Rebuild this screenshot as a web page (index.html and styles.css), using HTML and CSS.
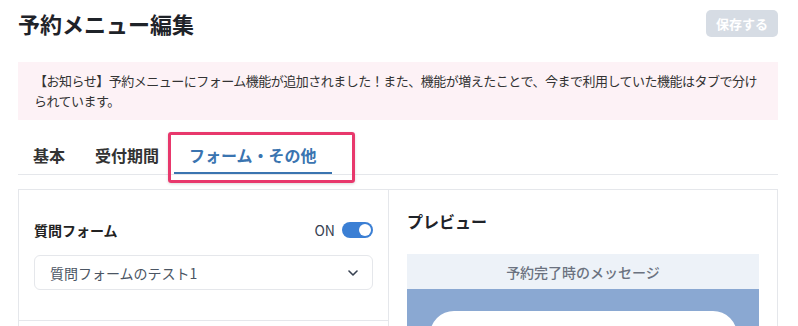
FILE: index.html
```html
<!DOCTYPE html>
<html lang="ja">
<head>
    <meta charset="UTF-8">
    <meta name="viewport" content="width=device-width, initial-scale=1.0">
    <title>予約メニュー編集</title>
    <link rel="stylesheet" href="styles.css">
</head>
<body>
    <div class="page">
        <header class="page-header">
            <h1>予約メニュー編集</h1>
            <button class="save-btn" disabled>保存する</button>
        </header>
        <div class="notice">【お知らせ】予約メニューにフォーム機能が追加されました！また、機能が増えたことで、今まで利用していた機能はタブで分けられています。</div>
        <nav class="tabs">
            <a class="tab">基本</a>
            <a class="tab">受付期間</a>
            <a class="tab active">フォーム・その他</a>
            <span class="highlight"></span>
        </nav>
        <div class="panel">
            <div class="settings">
                <section class="setting">
                    <div class="setting-row">
                        <h3>質問フォーム</h3>
                        <label class="switch">
                            <span>ON</span>
                            <span class="toggle"><span class="knob"></span></span>
                        </label>
                    </div>
                    <div class="select">
                        <span>質問フォームのテスト1</span>
                        <svg width="10" height="6" viewBox="0 0 10 6"><path d="M1 1l4 4 4-4" fill="none" stroke="#374151" stroke-width="1.6" stroke-linecap="round" stroke-linejoin="round"/></svg>
                    </div>
                </section>
            </div>
            <div class="preview">
                <h3>プレビュー</h3>
                <div class="preview-box">
                    <div class="preview-head">予約完了時のメッセージ</div>
                    <div class="preview-body">
                        <div class="preview-card"></div>
                    </div>
                </div>
            </div>
        </div>
    </div>
</body>
</html>
```

FILE: styles.css
```css
html, body {
    margin: 0;
    padding: 0;
    background: #fff;
    overflow: hidden;
}
body {
    font-family: "Noto Sans CJK JP", "Noto Sans", sans-serif;
    color: #333;
}
.page {
    padding: 10px 20px 0 18px;
}
.page-header {
    display: flex;
    justify-content: space-between;
    align-items: center;
    height: 27px;
}
.page-header h1 {
    margin: 0;
    font-size: 22px;
    font-weight: 700;
    color: #1f2329;
    line-height: 27px;
}
.save-btn {
    width: 72px;
    height: 27px;
    border: none;
    border-radius: 5px;
    background: #d6dce4;
    color: #fff;
    font-family: inherit;
    font-size: 13px;
    font-weight: 700;
    padding: 0;
}
.notice {
    margin-top: 25px;
    background: #fdf2f6;
    padding: 9px 16px;
    font-size: 13px;
    line-height: 20px;
    letter-spacing: -0.5px;
    color: #333;
}
.tabs {
    position: relative;
    display: flex;
    margin-top: 23px;
    border-bottom: 1px solid #e5e7eb;
}
.tab {
    padding: 0 15px 5px;
    font-size: 16px;
    line-height: 24px;
    font-weight: 700;
    color: #333;
    border-bottom: 2px solid transparent;
}
.tab.active {
    color: #3a74b0;
    border-bottom-color: #3a74b0;
}
.highlight {
    position: absolute;
    left: 150px;
    top: -11px;
    width: 181px;
    height: 45px;
    border: 3px solid #e8386c;
    border-radius: 3px;
    box-shadow: 0 1px 3px rgba(0, 0, 0, 0.15);
}
.panel {
    margin-top: 14px;
    display: grid;
    grid-template-columns: 370px 1fr;
    border: 1px solid #e5e7eb;
    border-bottom: none;
    height: 137px;
    overflow: hidden;
}
.settings {
    border-right: 1px solid #e5e7eb;
}
.setting {
    padding: 28px 15px 30px;
    border-bottom: 1px solid #e5e7eb;
}
.setting-row {
    display: flex;
    justify-content: space-between;
    align-items: center;
    height: 24px;
}
.setting-row h3 {
    margin: 0;
    font-size: 14px;
    font-weight: 700;
    color: #222;
}
.switch {
    display: flex;
    align-items: center;
    gap: 7px;
    font-size: 14px;
    color: #374151;
}
.toggle {
    width: 31px;
    height: 16px;
    border-radius: 8px;
    background: #3b7fd4;
    position: relative;
}
.knob {
    position: absolute;
    right: 2px;
    top: 2px;
    width: 12px;
    height: 12px;
    border-radius: 50%;
    background: #fff;
}
.select {
    margin-top: 13px;
    height: 35px;
    box-sizing: border-box;
    border: 1px solid #e5e7eb;
    border-radius: 6px;
    display: flex;
    align-items: center;
    justify-content: space-between;
    padding: 0 14px 0 15px;
    font-size: 14px;
    color: #4b5563;
}
.preview {
    padding: 19px 18px 0;
}
.preview h3 {
    margin: 0 0 21px;
    font-size: 16px;
    line-height: 24px;
    font-weight: 700;
    color: #1f2329;
}
.preview-head {
    height: 35px;
    background: #edf2f8;
    display: flex;
    align-items: center;
    justify-content: center;
    font-size: 14px;
    font-weight: 500;
    color: #6b7280;
}
.preview-body {
    background: #8aa8d2;
    padding: 22px 22px 0 23px;
    height: 120px;
}
.preview-card {
    background: #fff;
    border-radius: 24px;
    height: 150px;
}
```
